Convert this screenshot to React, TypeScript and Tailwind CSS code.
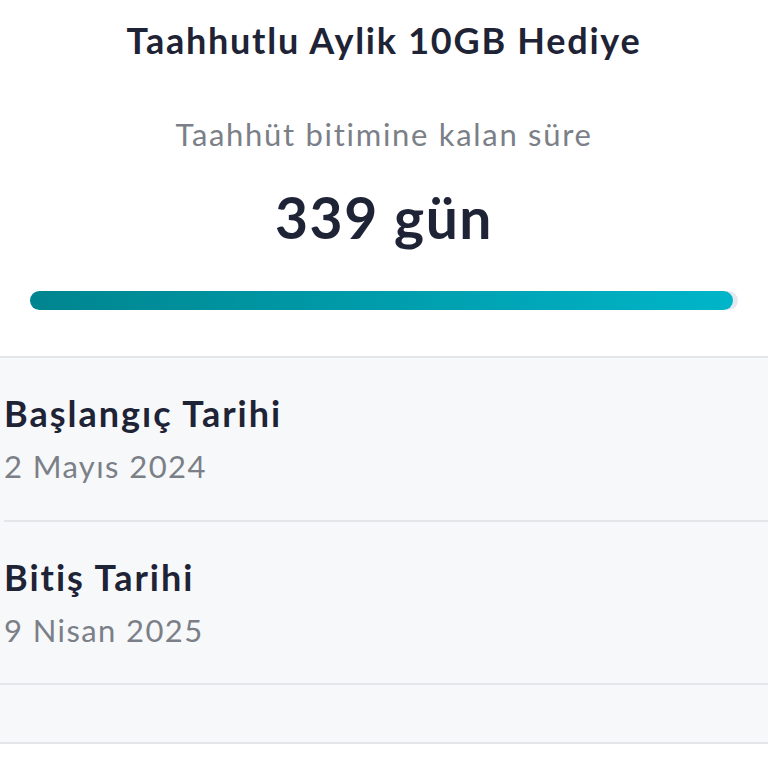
export default function App() {
    return (
        <div className="min-h-[768px] w-[768px] bg-white font-['Lato','Noto_Sans',sans-serif]">
            {/* Başlık ve kalan süre */}
            <div className="flex flex-col items-center pt-[18px]">
                <h1 className="text-[36px] font-bold leading-[44px] tracking-[1.75px] text-[#1e2336]">
                    Taahhutlu Aylik 10GB Hediye
                </h1>
                <p className="mt-[52px] text-[31px] leading-[40px] tracking-[1.7px] text-[#7b7f87]">
                    Taahhüt bitimine kalan süre
                </p>
                <p className="mt-[31px] text-[57px] font-bold leading-[64px] tracking-[1.5px] text-[#1e2336]">
                    339 gün
                </p>
            </div>
            {/* İlerleme çubuğu */}
            <div className="pl-[30px] pr-[30px] pt-[42px]">
                <div className="h-[19px] w-full rounded-full bg-[#e4e9ef]">
                    <div className="h-full w-[99.3%] rounded-full bg-gradient-to-r from-[#00858f] to-[#00b5c9]" />
                </div>
            </div>
            {/* Tarih listesi */}
            <div className="mt-[46px] border-t-2 border-[#e4e6ea] bg-[#f7f8fa]">
                <div className="pl-[4px]">
                    <div className="border-b-2 border-[#e4e6ea] pb-[34px] pt-[33px]">
                        <div className="text-[36px] font-bold leading-[44px] tracking-[2px] text-[#1e2336]">
                            Başlangıç Tarihi
                        </div>
                        <div className="mt-[11px] text-[31px] leading-[40px] tracking-[1.4px] text-[#7b7f87]">
                            2 Mayıs 2024
                        </div>
                    </div>
                </div>
                <div className="border-b-2 border-[#e4e6ea] pb-[33px] pl-[4px] pt-[33px]">
                    <div className="text-[36px] font-bold leading-[44px] tracking-[2px] text-[#1e2336]">
                        Bitiş Tarihi
                    </div>
                    <div className="mt-[11px] text-[31px] leading-[40px] tracking-[1.4px] text-[#7b7f87]">
                        9 Nisan 2025
                    </div>
                </div>
                <div className="h-[59px] border-b-2 border-[#e4e6ea]" />
            </div>
        </div>
    );
}
